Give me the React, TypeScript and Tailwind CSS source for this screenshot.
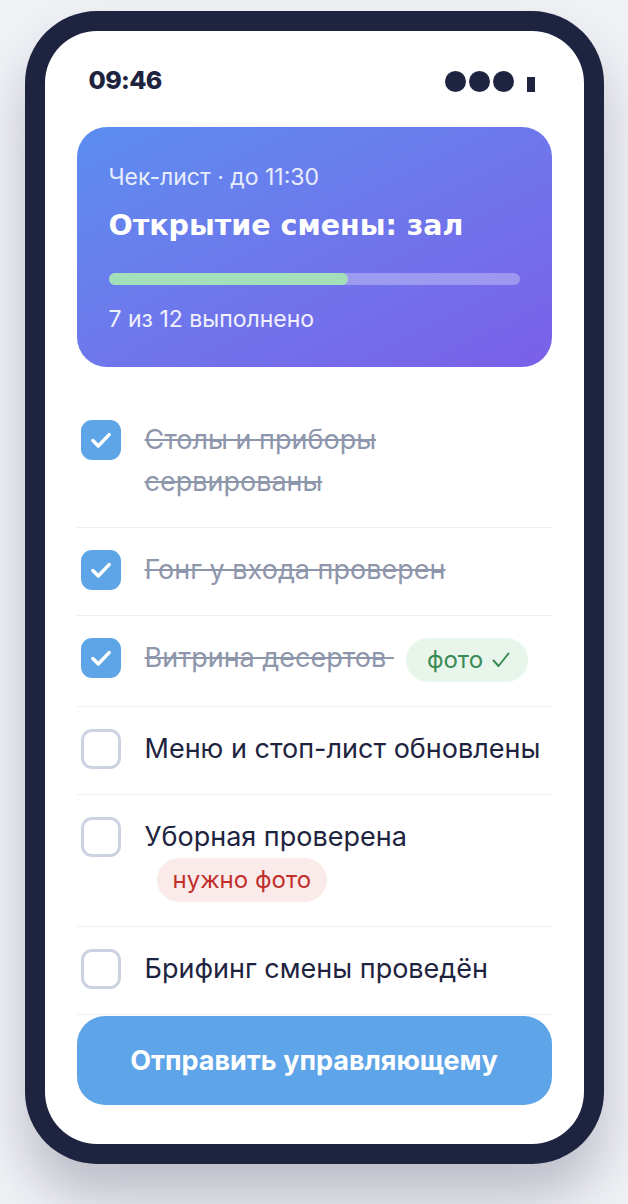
import React from "react";

type Item = {
  label: string;
  done: boolean;
  tag?: { text: string; tone: "ok" | "warn" };
};

const items: Item[] = [
  { label: "Столы и приборы сервированы", done: true },
  { label: "Гонг у входа проверен", done: true },
  { label: "Витрина десертов", done: true, tag: { text: "фото", tone: "ok" } },
  { label: "Меню и стоп-лист обновлены", done: false },
  { label: "Уборная проверена", done: false, tag: { text: "нужно фото", tone: "warn" } },
  { label: "Брифинг смены проведён", done: false },
];

function Checkbox({ checked }: { checked: boolean }) {
  if (checked) {
    return (
      <span className="flex h-10 w-10 shrink-0 items-center justify-center rounded-[11px] bg-[#5ea5e8]">
        <svg viewBox="0 0 24 24" className="h-[26px] w-[26px]" fill="none" stroke="white" strokeWidth="3.2">
          <path d="M4.5 12.5l5 5L19.5 7" strokeLinecap="round" strokeLinejoin="round" />
        </svg>
      </span>
    );
  }
  return <span className="h-10 w-10 shrink-0 rounded-[11px] border-[3px] border-[#ccd3e0] bg-white" />;
}

function Tag({ text, tone }: { text: string; tone: "ok" | "warn" }) {
  const cls =
    tone === "ok" ? "bg-[#e7f5ea] text-[#3b8a55] pl-[21px] pr-[18px]" : "bg-[#fbeaea] text-[#c22f2b] px-4";
  return (
    <span
      className={`ml-3 inline-flex items-center rounded-full align-middle text-[24px] leading-[44px] ${cls}`}
    >
      {text}
      {tone === "ok" && (
        <svg viewBox="0 0 18 16" className="ml-[9px] h-[16px] w-[18px]" fill="none" stroke="currentColor" strokeWidth="2">
          <path d="M1.5 8.5l5 5.5L16.5 1.5" strokeLinecap="round" strokeLinejoin="round" />
        </svg>
      )}
    </span>
  );
}

export default function App() {
  return (
    <div
      className="flex min-h-[1204px] justify-center bg-[#f0f1f5] pt-[11px]"
      style={{ fontFamily: "Inter, 'Noto Sans', sans-serif" }}
    >
      <div className="h-[1153px] w-[579px] rounded-[72px] bg-[#1e2340] p-5 shadow-[0_34px_50px_rgba(30,35,64,0.24)]">
        <div className="flex h-full flex-col rounded-[52px] bg-white px-8 pt-[30px]">
          {/* status bar */}
          <div className="flex h-10 items-center justify-between pl-3 pr-[17px]">
            <span className="text-[25px] font-extrabold tracking-tight text-[#1e2340]">09:46</span>
            <div className="flex items-center gap-[3px]">
              <span className="h-[21px] w-[21px] rounded-full bg-[#1e2340]" />
              <span className="h-[21px] w-[21px] rounded-full bg-[#1e2340]" />
              <span className="h-[21px] w-[21px] rounded-full bg-[#1e2340]" />
              <span className="ml-[10px] mt-[6px] h-[15px] w-2 bg-[#1e2340]" />
            </div>
          </div>

          {/* header card */}
          <div className="mt-[26px] h-[240px] rounded-[30px] bg-linear-to-br from-[#5b8def] to-[#7a5fe8] px-8 pt-8 text-white">
            <div className="text-[23px] leading-9 text-white/85">Чек-лист · до 11:30</div>
            <div
              className="mt-[13px] text-[28.5px] font-bold leading-9"
              style={{ fontFamily: "'DejaVu Sans', Inter, sans-serif" }}
            >
              Открытие смены: зал
            </div>
            <div className="mt-[29px] h-3 rounded-full bg-white/30">
              <div className="h-3 rounded-full bg-[#a3e0b9]" style={{ width: `${(7 / 12) * 100}%` }} />
            </div>
            <div className="mt-[19px] text-[23px] leading-[30px] text-white/90">7 из 12 выполнено</div>
          </div>

          {/* checklist */}
          <ul className="mt-[31px]">
            {items.map((it) => (
              <li key={it.label} className="flex gap-6 border-b border-[#eeeff5] pb-6 pl-1 pt-[21px]">
                <span className="flex h-[42px] items-center">
                  <Checkbox checked={it.done} />
                </span>
                <span
                  className={`text-[27px] leading-[42px] ${
                    it.done ? "text-[#8e96ab] line-through decoration-[2px]" : "text-[#1e2340]"
                  }`}
                >
                  {it.label}
                  {it.tag ? " " : ""}
                  {it.tag && <Tag text={it.tag.text} tone={it.tag.tone} />}
                </span>
              </li>
            ))}
          </ul>

          <button className="mt-px h-[89px] w-full shrink-0 rounded-[28px] bg-[#5ea4e8] text-[27px] font-bold text-white">
            Отправить управляющему
          </button>
        </div>
      </div>
    </div>
  );
}
